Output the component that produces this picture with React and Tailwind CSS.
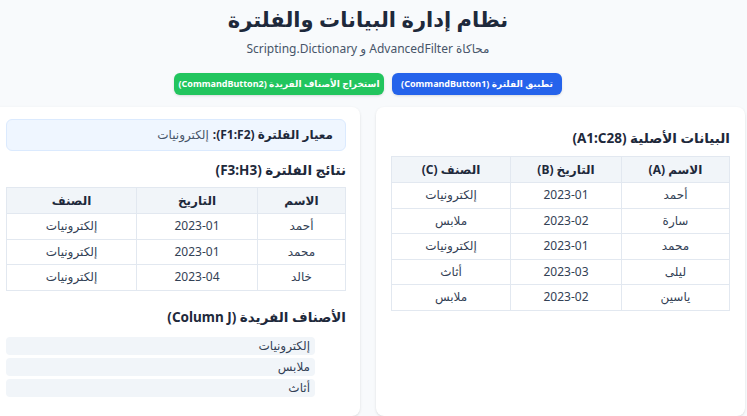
const original = [
  { name: "أحمد", date: "2023-01", cat: "إلكترونيات" },
  { name: "سارة", date: "2023-02", cat: "ملابس" },
  { name: "محمد", date: "2023-01", cat: "إلكترونيات" },
  { name: "ليلى", date: "2023-03", cat: "أثاث" },
  { name: "ياسين", date: "2023-02", cat: "ملابس" },
];

const filtered = [
  { name: "أحمد", date: "2023-01", cat: "إلكترونيات" },
  { name: "محمد", date: "2023-01", cat: "إلكترونيات" },
  { name: "خالد", date: "2023-04", cat: "إلكترونيات" },
];

const unique = ["إلكترونيات", "ملابس", "أثاث"];

const DataTable = ({ headers, rows, widths }) => (
  <table className="w-full border-collapse text-[12px] text-[#334155]">
    <thead>
      <tr className="bg-[#f1f5f9] h-[26px]">
        {headers.map((h, i) => (
          <th key={h} className={`border border-[#e2e8f0] font-bold text-[#1e293b] ${widths[i]}`}>
            {h}
          </th>
        ))}
      </tr>
    </thead>
    <tbody>
      {rows.map((r, i) => (
        <tr key={i} className="h-[25.5px]">
          <td className="border border-[#e2e8f0] text-center">{r.name}</td>
          <td className="border border-[#e2e8f0] text-center">{r.date}</td>
          <td className="border border-[#e2e8f0] text-center">{r.cat}</td>
        </tr>
      ))}
    </tbody>
  </table>
);

const App = () => {
  return (
    <div
      dir="rtl"
      className="min-h-screen bg-[#f8fafc] overflow-hidden pr-[2px]"
      style={{ fontFamily: '"Noto Sans", "DejaVu Sans", sans-serif' }}
    >
      <div className="w-[754px]">
        <div className="pt-[4px] text-center">
          <h1 className="text-[21px] leading-[30px] font-bold text-[#1e293b]">نظام إدارة البيانات والفلترة</h1>
          <p className="mt-[5px] text-[12px] leading-[20px] text-[#475569]">
            محاكاة AdvancedFilter و Scripting.Dictionary
          </p>
          <div className="mt-[14px] flex justify-center gap-2">
            <button className="h-[22px] w-[170px] rounded-md bg-[#2563eb] text-[9px] font-bold text-white shadow-sm">
              تطبيق الفلترة (CommandButton1)
            </button>
            <button className="h-[22px] w-[210px] rounded-md bg-[#22c55e] text-[9px] font-bold text-white shadow-sm">
              استخراج الأصناف الفريدة (CommandButton2)
            </button>
          </div>
        </div>

        <div className="mt-[12px] grid grid-cols-[369px_369px] gap-4">
          <div className="h-[309px] rounded-lg bg-white px-[15px] pt-[21px] shadow-sm">
            <h2 className="mb-[8px] text-[13.5px] leading-[20px] font-bold text-[#1e293b]">البيانات الأصلية (A1:C28)</h2>
            <DataTable
              headers={["الاسم (A)", "التاريخ (B)", "الصنف (C)"]}
              rows={original}
              widths={["w-[108px]", "w-[111px]", ""]}
            />
          </div>

          <div className="h-[309px] rounded-lg bg-white pr-[14px] pl-[15px] pt-[12px] shadow-sm">
            <div className="flex h-[32px] items-center rounded-md border border-[#dbeafe] bg-[#eff6ff] px-3 text-[12px] text-[#475569]">
              <span className="font-bold text-[#1e293b]">معيار الفلترة (F1:F2):</span>
              <span className="mr-1">إلكترونيات</span>
            </div>
            <h2 className="mt-[9px] mb-[7px] text-[13.5px] leading-[20px] font-bold text-[#1e293b]">نتائج الفلترة (F3:H3)</h2>
            <DataTable
              headers={["الاسم", "التاريخ", "الصنف"]}
              rows={filtered}
              widths={["w-[88px]", "w-[121px]", ""]}
            />
            <h2 className="mt-[16px] mb-[10px] text-[13.5px] leading-[20px] font-bold text-[#1e293b]">الأصناف الفريدة (Column J)</h2>
            <ul className="flex flex-col gap-[3px] pr-[31px]">
              {unique.map((u) => (
                <li key={u} className="h-[18px] rounded bg-[#f1f5f9] px-[5px] text-[12px] leading-[18px] text-[#334155]">
                  {u}
                </li>
              ))}
            </ul>
          </div>
        </div>
      </div>
    </div>
  );
};

export default App;
